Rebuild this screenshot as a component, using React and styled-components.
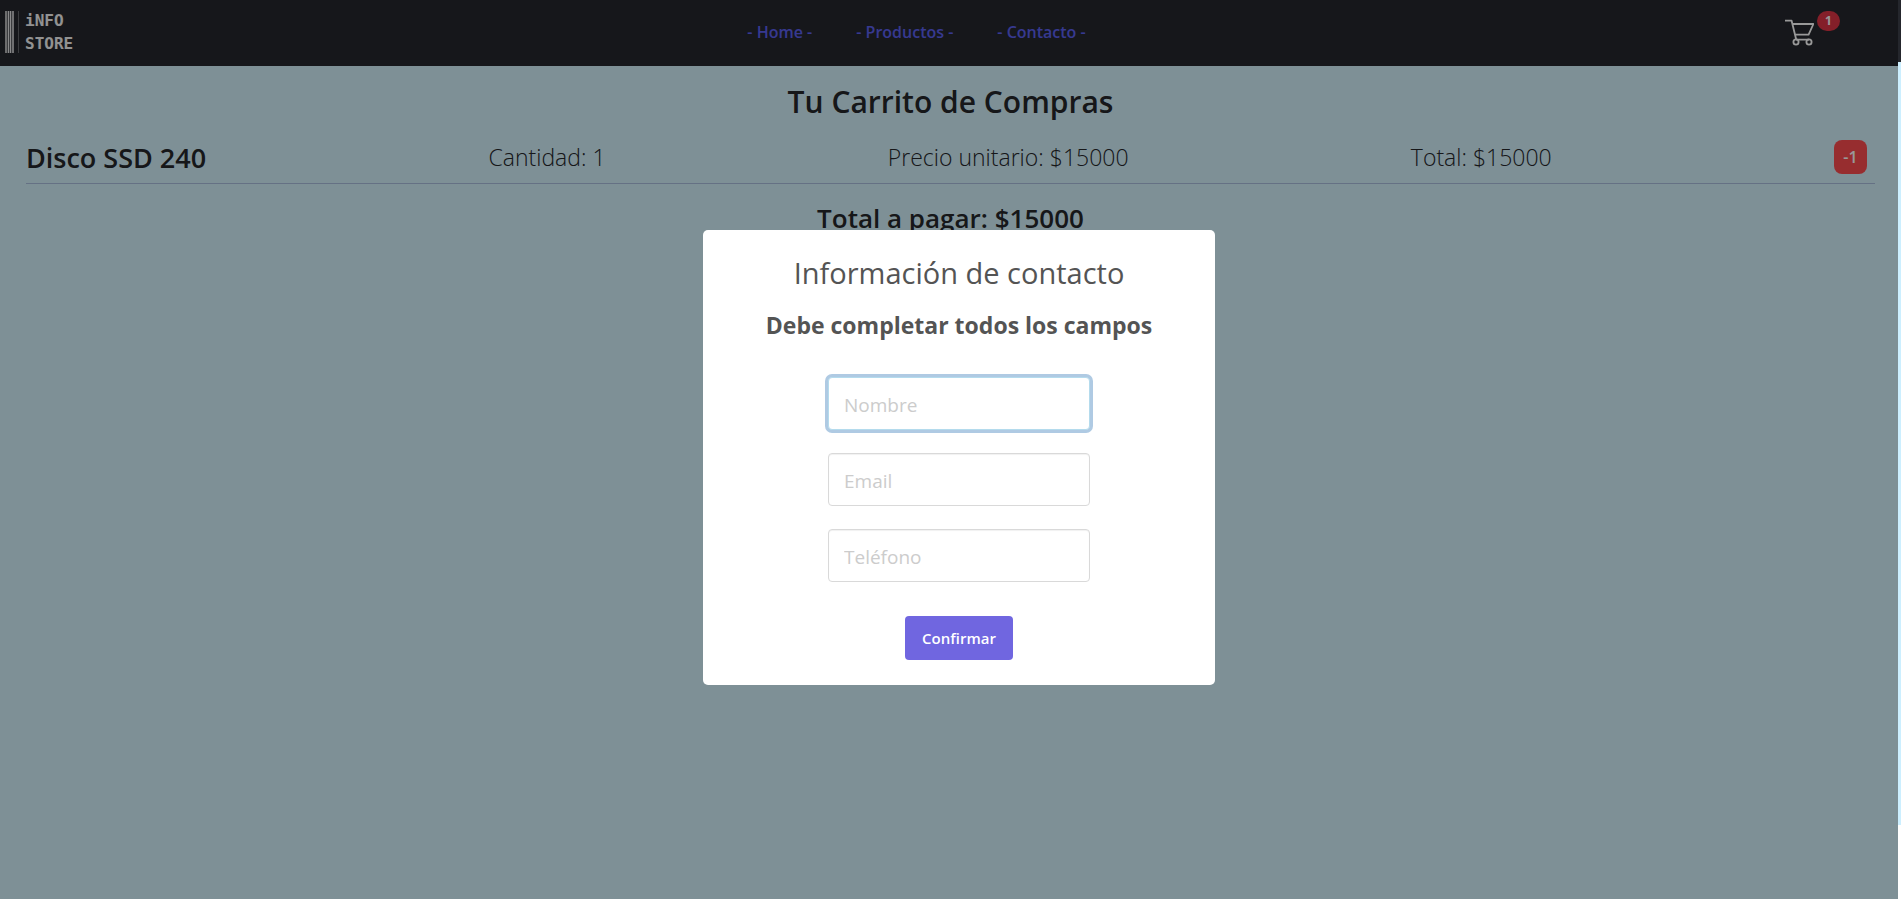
import React from 'react';
import styled, { createGlobalStyle } from 'styled-components';

const Global = createGlobalStyle`
  *, *::before, *::after { box-sizing: border-box; }
  body { margin: 0; background: #fff; color: #25272b; font-family: "Open Sans", "Noto Sans", sans-serif; }
  h1, h2, p { margin: 0; }
`;

const Shell = styled.div`
  display: flex;
  min-height: 100vh;
`;

const Page = styled.div`
  flex: 1;
  background: #d3f0fa;
`;

const ScrollTrack = styled.div`
  width: 3px;
  display: flex;
  flex-direction: column;
`;

const TrackPart = styled.div`
  flex: ${({ $grow }) => $grow};
  background: ${({ $color }) => $color};
`;

const Header = styled.header`
  display: grid;
  grid-template-columns: 1fr auto 1fr;
  align-items: center;
  height: 66px;
  padding: 0 58px 2px 5px;
  background: #25272d;
`;

const Logo = styled.a`
  display: flex;
  align-items: center;
  gap: 6px;
  color: #f4f4f4;
  text-decoration: none;
`;

const LogoName = styled.span`
  display: flex;
  flex-direction: column;
  font: bold 16px/23px "DejaVu Sans Mono", monospace;
`;

const Nav = styled.nav`
  display: flex;
  gap: 44px;
  padding-right: 12px;
`;

const NavLink = styled.a`
  color: #5c60f0;
  font-size: 16px;
  font-weight: 600;
  line-height: 24px;
  text-decoration: none;
`;

const CartLink = styled.a`
  display: flex;
  justify-self: end;
  align-items: flex-start;
  gap: 3px;
  padding-bottom: 7px;
  color: #fff;
  text-decoration: none;

  svg { margin-top: 5px; }
`;

const CartCount = styled.span`
  width: 23px;
  height: 20px;
  border-radius: 10px;
  background: #dc3545;
  color: #fff;
  font-size: 12px;
  font-weight: 700;
  line-height: 20px;
  text-align: center;
`;

const Main = styled.main`
  padding: 16px 23px 0 26px;
  text-align: center;
`;

const Title = styled.h1`
  font-size: 30px;
  font-weight: 600;
  line-height: 40px;
`;

const Item = styled.div`
  display: flex;
  align-items: center;
  justify-content: space-between;
  height: 50px;
  margin-top: 12px;
  padding: 0 8px 3px 0;
  border-bottom: 1px solid #a9bcdd;
`;

const ItemName = styled.h2`
  font-size: 27px;
  font-weight: 600;
`;

const ItemText = styled.p`
  font-size: 23px;
  font-weight: 300;
`;

const RemoveButton = styled.button`
  width: 33px;
  height: 34px;
  padding: 0;
  border: 0;
  border-radius: 8px;
  background: #fc4c4f;
  color: #fff;
  font: 600 16px "Open Sans", sans-serif;
`;

const Total = styled.h2`
  margin-top: 16px;
  font-size: 26px;
  font-weight: 600;
  line-height: 36px;
`;

const Overlay = styled.div`
  position: fixed;
  inset: 0 3px 0 0;
  display: flex;
  align-items: center;
  justify-content: center;
  padding: 16px 0 0 20px;
  background: rgba(0, 0, 0, 0.4);
`;

const Dialog = styled.form`
  display: flex;
  flex-direction: column;
  align-items: center;
  width: 512px;
  padding: 24px 20px 25px;
  border-radius: 5px;
  background: #fff;
  color: #545454;
`;

const DialogTitle = styled.h2`
  font-size: 29px;
  font-weight: 400;
  line-height: 38px;
`;

const DialogHint = styled.p`
  margin-top: 15px;
  font-size: 23px;
  font-weight: 700;
  line-height: 36px;
`;

const Fields = styled.div`
  display: flex;
  flex-direction: column;
  gap: 23px;
  width: 262px;
  margin-top: 34px;
`;

const Input = styled.input`
  width: 100%;
  height: 53px;
  padding: 2px 15px 0;
  border: 1px solid #d9d9d9;
  border-radius: 4px;
  box-shadow: inset 0 1px 1px rgba(0, 0, 0, 0.06);
  color: #545454;
  font: 400 19px "Open Sans", sans-serif;

  &::placeholder { color: #ccc; }
  &:focus {
    outline: none;
    border-color: #b4dbed;
    box-shadow: 0 0 0 3px #afcae3;
  }
`;

const ConfirmButton = styled.button`
  height: 44px;
  margin-top: 34px;
  padding: 0 17px;
  border: 0;
  border-radius: 4px;
  background: #7066e0;
  color: #fff;
  font: 600 15px "Open Sans", sans-serif;
`;

function LogoBars() {
  return (
    <svg width="14" height="42" viewBox="0 0 14 42" fill="currentColor" aria-hidden="true">
      <rect x="0" width="2" height="42" opacity=".7" />
      <rect x="3" width="1" height="42" opacity=".9" />
      <rect x="5" width="1" height="42" opacity=".9" />
      <rect x="7" width="2" height="42" opacity=".6" />
      <rect x="2" width="7" height="42" opacity=".3" />
      <rect x="13" width="1" height="42" opacity=".3" />
    </svg>
  );
}

function CartIcon() {
  return (
    <svg width="29" height="30" viewBox="0 0 29 30" fill="none" stroke="currentColor" strokeWidth="1.8" strokeLinejoin="round" aria-hidden="true">
      <path d="M0 4.7h6.6l4.6 18.8M8 8h20.4l-4.8 10.7H10.2M11 23.7h13" />
      <circle cx="11" cy="26" r="2.6" />
      <circle cx="24" cy="26" r="2.6" />
    </svg>
  );
}

const links = ['Home', 'Productos', 'Contacto'];
const fields = [
  { name: 'Nombre', type: 'text' },
  { name: 'Email', type: 'email' },
  { name: 'Teléfono', type: 'tel' },
];

export default function App() {
  return (
    <Shell>
      <Global />
      <Page>
        <Header>
          <Logo href="#home">
            <LogoBars />
            <LogoName><span>iNFO</span><span>STORE</span></LogoName>
          </Logo>
          <Nav>
            {links.map((l) => <NavLink key={l} href={`#${l.toLowerCase()}`}>- {l} -</NavLink>)}
          </Nav>
          <CartLink href="#carrito">
            <CartIcon />
            <CartCount>1</CartCount>
          </CartLink>
        </Header>
        <Main>
          <Title>Tu Carrito de Compras</Title>
          <Item>
            <ItemName>Disco SSD 240</ItemName>
            <ItemText>Cantidad: 1</ItemText>
            <ItemText>Precio unitario: $15000</ItemText>
            <ItemText>Total: $15000</ItemText>
            <RemoveButton type="button">-1</RemoveButton>
          </Item>
          <Total>Total a pagar: $15000</Total>
        </Main>
      </Page>
      <ScrollTrack>
        <TrackPart $grow={62} $color="#25272d" />
        <TrackPart $grow={763} $color="#ccefff" />
        <TrackPart $grow={74} $color="#fff" />
      </ScrollTrack>
      <Overlay>
        <Dialog role="dialog" aria-labelledby="dialog-title">
          <DialogTitle id="dialog-title">Información de contacto</DialogTitle>
          <DialogHint>Debe completar todos los campos</DialogHint>
          <Fields>
            {fields.map((f, i) => (
              <Input key={f.name} type={f.type} placeholder={f.name} aria-label={f.name} autoFocus={i === 0} />
            ))}
          </Fields>
          <ConfirmButton type="button">Confirmar</ConfirmButton>
        </Dialog>
      </Overlay>
    </Shell>
  );
}
